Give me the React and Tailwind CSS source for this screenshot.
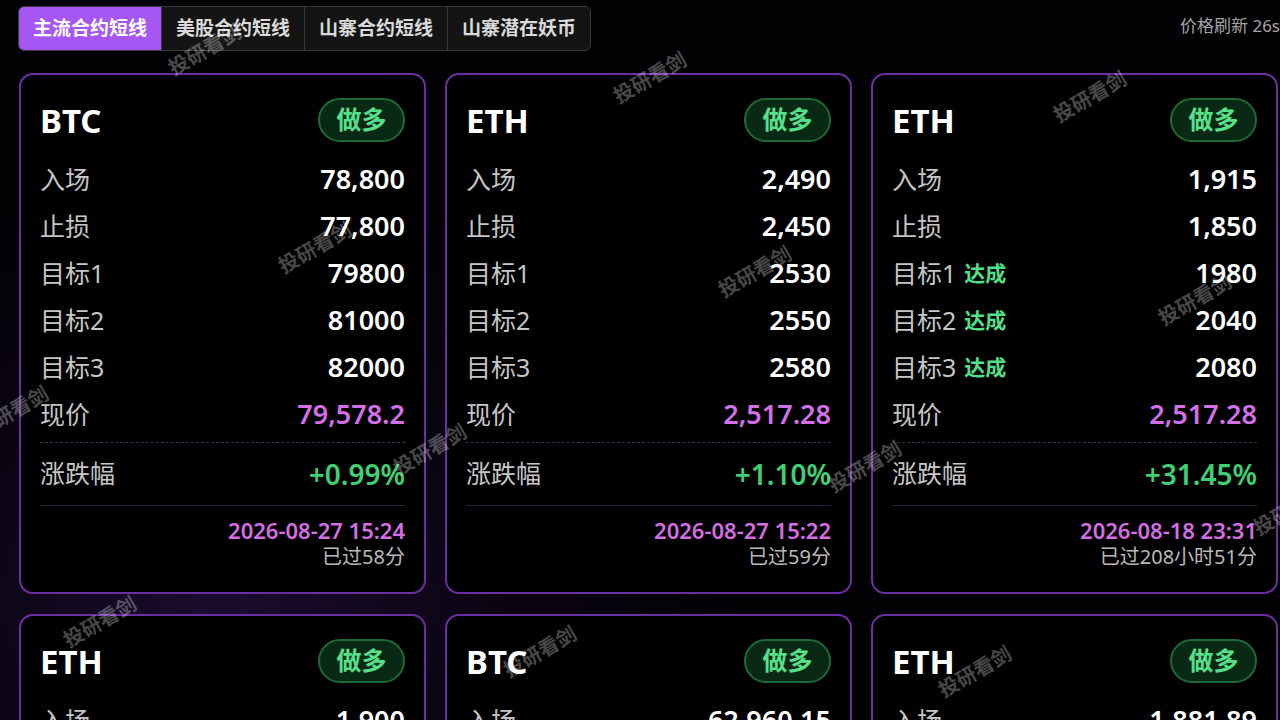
const tabs = ['主流合约短线', '美股合约短线', '山寨合约短线', '山寨潜在妖币'];

const cards = [
  {
    sym: 'BTC',
    rows: ['78,800', '77,800', '79800', '81000', '82000'],
    hits: [false, false, false],
    price: '79,578.2',
    change: '+0.99%',
    time: '2026-08-27 15:24',
    ago: '已过58分',
  },
  {
    sym: 'ETH',
    rows: ['2,490', '2,450', '2530', '2550', '2580'],
    hits: [false, false, false],
    price: '2,517.28',
    change: '+1.10%',
    time: '2026-08-27 15:22',
    ago: '已过59分',
  },
  {
    sym: 'ETH',
    rows: ['1,915', '1,850', '1980', '2040', '2080'],
    hits: [true, true, true],
    price: '2,517.28',
    change: '+31.45%',
    time: '2026-08-18 23:31',
    ago: '已过208小时51分',
  },
  {
    sym: 'ETH',
    rows: ['1,900', '1,860', '1940', '1980', '2020'],
    hits: [true, false, false],
    price: '2,517.28',
    change: '+32.49%',
    time: '2026-08-16 10:05',
    ago: '已过269小时17分',
  },
  {
    sym: 'BTC',
    rows: ['62,960.15', '61,900', '64000', '65500', '67000'],
    hits: [true, true, true],
    price: '79,578.2',
    change: '+26.39%',
    time: '2026-08-12 09:40',
    ago: '已过365小时42分',
  },
  {
    sym: 'ETH',
    rows: ['1,881.89', '1,820', '1930', '1990', '2050'],
    hits: [true, true, true],
    price: '2,517.28',
    change: '+33.76%',
    time: '2026-08-10 21:18',
    ago: '已过402小时4分',
  },
];

const marks = [
  [205, 50], [650, 78], [1090, 97],
  [315, 248], [755, 272], [1195, 300],
  [12, 412], [430, 450], [865, 467], [1290, 510],
  [100, 622], [540, 652], [975, 672],
];

function Row({ label, value, hit, valueClass }) {
  return (
    <div className="flex h-[47px] items-center justify-between">
      <div className="flex items-center gap-[8px]">
        <span className="text-[25px] text-[#c6c6c6]">{label}</span>
        {hit && <span className="text-[21px] font-bold text-[#52df8a]">达成</span>}
      </div>
      <span className={valueClass || 'text-[27px] font-semibold text-white'}>{value}</span>
    </div>
  );
}

function Card({ c }) {
  const labels = ['入场', '止损', '目标1', '目标2', '目标3'];
  return (
    <div className="rounded-[14px] border-2 border-[#6b2fa3] bg-black px-[19px] pb-[24px] pt-[23px]">
      <div className="flex h-[44px] items-center justify-between">
        <span className="text-[33px] font-bold leading-none text-white">{c.sym}</span>
        <span className="flex h-[44px] w-[87px] items-center justify-center rounded-full border-2 border-[#1d6a36] bg-[#0a2914] text-[25px] font-bold text-[#56e08c]">
          做多
        </span>
      </div>
      <div className="mt-[14px]">
        {labels.map((l, i) => (
          <Row key={l} label={l} value={c.rows[i]} hit={i >= 2 && c.hits[i - 2]} />
        ))}
        <Row label="现价" value={c.price} valueClass="text-[27px] font-semibold text-[#d36fe9]" />
      </div>
      <div className="mt-[4px] border-t border-dashed border-[#3b2a5a]" />
      <div className="flex h-[62px] items-center justify-between">
        <span className="text-[25px] text-[#c6c6c6]">涨跌幅</span>
        <span className="text-[28px] font-semibold text-[#3fcf75]">{c.change}</span>
      </div>
      <div className="border-t border-[#2a1f3f]" />
      <div className="mt-[12px] flex flex-col items-end">
        <span className="text-[22px] font-semibold leading-[24px] text-[#d46ee2]">{c.time}</span>
        <span className="mt-[4px] text-[20px] leading-[22px] text-[#b9b9b9]">{c.ago}</span>
      </div>
    </div>
  );
}

export default function App() {
  return (
    <div
      className="relative min-h-screen overflow-hidden bg-[radial-gradient(ellipse_520px_420px_at_220px_600px,#1b0c2e_0%,#0a0412_55%,#020104_100%)] pb-[40px] pl-[19px] pr-[2px]"
      style={{ fontFamily: '"Noto Sans", "Noto Sans CJK SC", sans-serif' }}
    >
      <div className="flex items-start justify-between pt-[6px]">
        <div className="-ml-[1px] flex h-[45px] overflow-hidden rounded-[6px] border border-[#3a3a3a] bg-[#141414]">
          {tabs.map((t, i) => (
            <div
              key={t}
              className={
                i === 0
                  ? 'flex items-center bg-[#a656f2] px-[14px] text-[19px] font-semibold text-white'
                  : 'flex items-center border-l border-[#3a3a3a] px-[14px] text-[19px] font-semibold text-[#dadada]'
              }
            >
              {t}
            </div>
          ))}
        </div>
        <span className="-mr-[2px] mt-[10px] whitespace-nowrap text-[17px] leading-[20px] text-[#a3a3a3]">价格刷新 26s</span>
      </div>

      <div className="mt-[22px] grid grid-cols-3 gap-x-[19px] gap-y-[20px]">
        {cards.map((c, i) => (
          <Card key={i} c={c} />
        ))}
      </div>

      <div className="pointer-events-none absolute inset-0 z-10">
        {marks.map(([x, y], i) => (
          <span
            key={i}
            className="absolute -translate-x-1/2 -translate-y-1/2 -rotate-[30deg] whitespace-nowrap text-[20px] font-bold text-white/30"
            style={{ left: x, top: y }}
          >
            投研看剑
          </span>
        ))}
      </div>
    </div>
  );
}
